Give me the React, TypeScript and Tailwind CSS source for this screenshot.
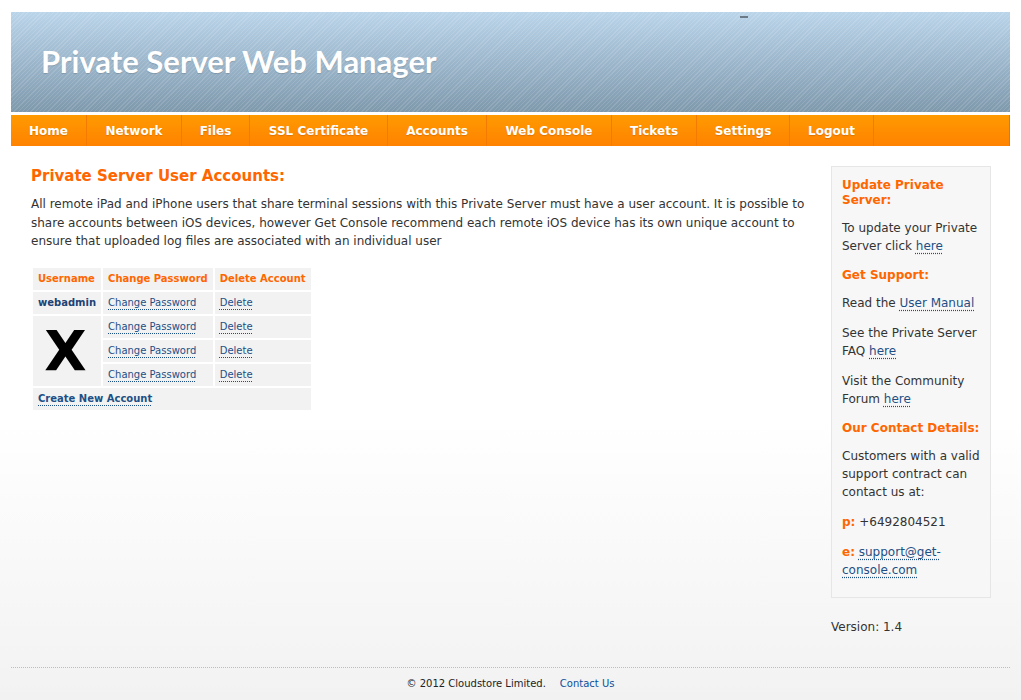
import React from "react";

const navItems = [
  { label: "Home", w: "w-[76px]" },
  { label: "Network", w: "w-[95px]" },
  { label: "Files", w: "w-[68px]" },
  { label: "SSL Certificate", w: "w-[138px]" },
  { label: "Accounts", w: "w-[99px]" },
  { label: "Web Console", w: "w-[125px]" },
  { label: "Tickets", w: "w-[85px]" },
  { label: "Settings", w: "w-[93px]" },
  { label: "Logout", w: "w-[84px]" },
];

function DotLink({ children, bold = false }: { children: React.ReactNode; bold?: boolean }) {
  return (
    <a
      href="#"
      className={`text-[#1d4f86] underline decoration-dotted decoration-[#1d4f86] underline-offset-[3px] ${bold ? "font-bold" : ""}`}
    >
      {children}
    </a>
  );
}

export default function App() {
  return (
    <div className="min-h-[700px] bg-gradient-to-b from-white from-60% to-[#f2f2f2] font-['DejaVu_Sans',Verdana,sans-serif] text-[#333]">
      <div className="mx-[11px] pt-3">
        {/* Banner */}
        <div className="relative h-[100px] flex items-center pl-[30px] bg-[repeating-linear-gradient(135deg,rgba(255,255,255,0.13)_0px,rgba(255,255,255,0.13)_1px,transparent_1px,transparent_3px),linear-gradient(to_bottom,#bad5ea,#7e98ac)]">
          <h1 className="font-['Lato',sans-serif] font-bold text-[31px] text-white leading-none -mt-[2px] [text-shadow:0_1px_1px_rgba(0,0,0,0.15)]">
            Private Server Web Manager
          </h1>
          <span className="absolute left-[729px] top-[4px] w-[8px] h-[2px] bg-[#6b7a86]" />
        </div>

        {/* Nav */}
        <nav className="mt-[3px] h-[31px] flex bg-gradient-to-b from-[#ff9a00] to-[#ff8200] border-r border-[#f07000]">
          {navItems.map((item) => (
            <a
              key={item.label}
              href="#"
              className={`${item.w} h-full flex items-center justify-center border-r border-[#f47a00] text-white font-bold text-[12px] [text-shadow:0_1px_1px_rgba(160,70,0,0.35)]`}
            >
              {item.label}
            </a>
          ))}
        </nav>

        {/* Content */}
        <div className="flex pt-[21px] pl-5 pr-[19px] gap-[10px]">
          <div className="flex-1">
            <h2 className="text-[15px] leading-[18px] font-bold text-[#ff6600] mb-[10px]">
              Private Server User Accounts:
            </h2>
            <p className="text-[12px] leading-[18.5px] mb-[15px]">
              All remote iPad and iPhone users that share terminal sessions with this Private Server must have a
              user account. It is possible to share accounts between iOS devices, however Get Console recommend
              each remote iOS device has its own unique account to ensure that uploaded log files are associated
              with an individual user
            </p>
            <table className="border-separate border-spacing-[2px] text-[10px] leading-[12px]">
              <thead>
                <tr>
                  <th className="bg-[#f2f2f2] pl-[5px] pr-[4px] py-[5px] text-left font-bold text-[#ff6600]">Username</th>
                  <th className="bg-[#f2f2f2] px-[5px] py-[5px] text-left font-bold text-[#ff6600]">Change Password</th>
                  <th className="bg-[#f2f2f2] px-[5px] py-[5px] text-left font-bold text-[#ff6600]">Delete Account</th>
                </tr>
              </thead>
              <tbody>
                <tr>
                  <td className="bg-[#f2f2f2] px-[5px] py-[5px] font-bold text-[#1d4275]">webadmin</td>
                  <td className="bg-[#f2f2f2] px-[5px] py-[5px]"><DotLink>Change Password</DotLink></td>
                  <td className="bg-[#f2f2f2] px-[5px] py-[5px]"><DotLink>Delete</DotLink></td>
                </tr>
                <tr>
                  <td rowSpan={3} className="bg-[#f2f2f2] p-0 text-center align-middle">
                    <span className="inline-block font-bold text-[55px] leading-none text-black pt-[2px] pr-[3px]">X</span>
                  </td>
                  <td className="bg-[#f2f2f2] px-[5px] py-[5px] h-[22px]"><DotLink>Change Password</DotLink></td>
                  <td className="bg-[#f2f2f2] px-[5px] py-[5px] h-[22px]"><DotLink>Delete</DotLink></td>
                </tr>
                <tr>
                  <td className="bg-[#f2f2f2] px-[5px] py-[5px] h-[22px]"><DotLink>Change Password</DotLink></td>
                  <td className="bg-[#f2f2f2] px-[5px] py-[5px] h-[22px]"><DotLink>Delete</DotLink></td>
                </tr>
                <tr>
                  <td className="bg-[#f2f2f2] px-[5px] py-[5px] h-[22px]"><DotLink>Change Password</DotLink></td>
                  <td className="bg-[#f2f2f2] px-[5px] py-[5px] h-[22px]"><DotLink>Delete</DotLink></td>
                </tr>
                <tr>
                  <td colSpan={3} className="bg-[#f2f2f2] px-[5px] py-[5px]">
                    <DotLink bold>Create New Account</DotLink>
                  </td>
                </tr>
              </tbody>
            </table>
          </div>

          {/* Sidebar */}
          <div className="w-[160px] shrink-0 -mt-px">
            <div className="bg-[#f7f7f7] border border-[#e6e6e6] pt-[11px] pb-[6px] pl-[10px] pr-[6px] text-[12px] leading-[18px]">
              <h3 className="font-bold text-[#ff6600] leading-[15px] mb-[11px]">Update Private Server:</h3>
              <p className="mb-3">
                To update your Private Server click <DotLink>here</DotLink>
              </p>
              <h3 className="font-bold text-[#ff6600] leading-[15px] pt-px mb-[11px]">Get Support:</h3>
              <p className="mb-3">
                Read the <DotLink>User Manual</DotLink>
              </p>
              <p className="mb-3">
                See the Private Server FAQ <DotLink>here</DotLink>
              </p>
              <p className="mb-3">
                Visit the Community Forum <DotLink>here</DotLink>
              </p>
              <h3 className="font-bold text-[#ff6600] leading-[15px] pt-px mb-[11px]">Our Contact Details:</h3>
              <p className="mb-3">Customers with a valid support contract can contact us at:</p>
              <p className="mb-3">
                <span className="font-bold text-[#ff6600]">p:</span> +6492804521
              </p>
              <p className="mb-3">
                <span className="font-bold text-[#ff6600]">e:</span> <DotLink>support@get-console.com</DotLink>
              </p>
            </div>
            <p className="mt-[20px] text-[12px] leading-[18px]">Version: 1.4</p>
          </div>
        </div>

        {/* Footer */}
        <div className="mt-[31px] border-t border-dotted border-[#bdbdbd] pt-[9px] pb-[10px] text-center text-[10px] leading-[14px] text-[#222]">
          © 2012 Cloudstore Limited.
          <a href="#" className="ml-[14px] text-[#0b4f9c]">Contact Us</a>
        </div>
      </div>
    </div>
  );
}
